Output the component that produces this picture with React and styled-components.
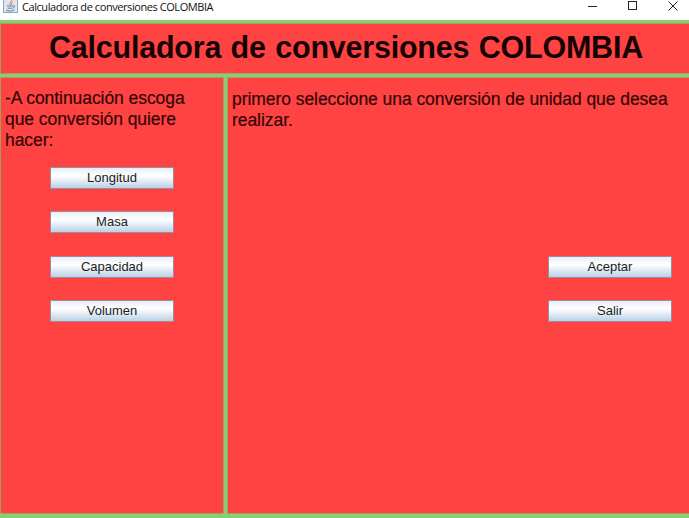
import React from "react";
import styled, { createGlobalStyle } from "styled-components";

const GlobalStyle = createGlobalStyle`
  * { box-sizing: border-box; }
  body { margin: 0; overflow: hidden; font-family: "Liberation Sans", Arial, sans-serif; }
`;

const Window = styled.div`
  width: 689px;
  height: 518px;
  display: flex;
  flex-direction: column;
  background: #8bcd74;
`;

const TitleBar = styled.header`
  height: 20px;
  flex: none;
  display: flex;
  align-items: flex-start;
  background: #fff;
  padding-left: 3px;
`;

const Caption = styled.span`
  margin-left: 4px;
  font: 11px/13px "Open Sans", sans-serif;
  letter-spacing: ${(p) => p.$tracking}px;
  color: #111;
  white-space: nowrap;
`;

const Controls = styled.div`
  margin-left: auto;
  display: flex;
  gap: 30px;
  padding: 0 11px 0 0;
`;

const Content = styled.main`
  flex: 1;
  display: grid;
  grid-template: 49px 435px / 222px 461px;
  gap: 5px;
  padding: 4px 0 5px 1px;
`;

const Panel = styled.section`
  background: #ff4343;
  box-shadow: 0 0 0 1px rgba(190, 120, 75, 0.55);
  padding: ${(p) => p.$pad || "0"};
`;

const Banner = styled(Panel)`
  grid-column: 1 / -1;
`;

const Heading = styled.h1`
  margin: 0;
  padding: 5px 0 0 48px;
  font-size: 30.5px;
  line-height: 37px;
  font-weight: 700;
  letter-spacing: ${(p) => p.$tracking}px;
  word-spacing: 1.2px;
  color: #170303;
  white-space: nowrap;
`;

const Message = styled.p`
  margin: 0;
  font-size: 17.5px;
  line-height: 21.3px;
  letter-spacing: ${(p) => p.$tracking}px;
  color: #350606;
  -webkit-text-stroke: 0.2px #350606;
  white-space: pre;
`;

const ButtonColumn = styled.div`
  display: flex;
  flex-direction: column;
  gap: 22.4px;
  width: 124px;
  margin: ${(p) => p.$offset};
`;

const Button = styled.button`
  height: 22px;
  border: 1px solid #a08b9e;
  border-radius: 0;
  padding: 0;
  background: linear-gradient(#e6eef6 0%, #fff 38%, #f6f9fc 48%, #b9d0e5 100%);
  font: 13px/18px "Liberation Sans", Arial, sans-serif;
  color: #1b1d22;
`;

const JavaIcon = () => (
  <svg width="15" height="13" viewBox="0 0 15 13">
    <rect x="0.5" y="-2" width="14" height="14.5" fill="#dce7f0" stroke="#8ba6bd" />
    <path d="M4 6h6M4.5 8.2h5M3 10.3c2 1 6 1 8.5-.3M10 6c2.5-.7 2 1.5 0 2" fill="none" stroke="#5b83a5" />
    <path d="M8.5 0c1 2-3 2.5-1.2 5M9.8 2C8 3 8.2 4 8.4 5.4" fill="none" stroke="#d9783f" />
  </svg>
);

const MinimizeIcon = () => (
  <svg width="10" height="12" viewBox="0 0 10 12" stroke="#222">
    <path d="M0 6.5h9" />
  </svg>
);

const MaximizeIcon = () => (
  <svg width="10" height="12" viewBox="0 0 10 12" fill="none" stroke="#222">
    <rect x="0.5" y="1.5" width="8" height="8" />
  </svg>
);

const CloseIcon = () => (
  <svg width="10" height="12" viewBox="0 0 10 12" stroke="#222">
    <path d="M0.5 1.5l9 9M9.5 1.5l-9 9" />
  </svg>
);

const units = ["Longitud", "Masa", "Capacidad", "Volumen"];
const actions = ["Aceptar", "Salir"];

export default function App() {
  return (
    <Window>
      <GlobalStyle />
      <TitleBar>
        <JavaIcon />
        <Caption $tracking={-0.43}>Calculadora de conversiones COLOMBIA</Caption>
        <Controls>
          <MinimizeIcon />
          <MaximizeIcon />
          <CloseIcon />
        </Controls>
      </TitleBar>
      <Content>
        <Banner>
          <Heading $tracking={-0.22}>Calculadora de conversiones COLOMBIA</Heading>
        </Banner>
        <Panel $pad="9.5px 0 0 4px">
          <Message $tracking={-0.06}>{"-A continuación escoga\nque conversión quiere\nhacer:"}</Message>
          <ButtonColumn $offset="15.6px 0 0 45px">
            {units.map((u) => <Button key={u}>{u}</Button>)}
          </ButtonColumn>
        </Panel>
        <Panel $pad="11px 0 0 4px">
          <Message $tracking={-0.06}>{"primero seleccione una conversión de unidad que desea\nrealizar."}</Message>
          <ButtonColumn $offset="124.4px 0 0 316px">
            {actions.map((a) => <Button key={a}>{a}</Button>)}
          </ButtonColumn>
        </Panel>
      </Content>
    </Window>
  );
}
